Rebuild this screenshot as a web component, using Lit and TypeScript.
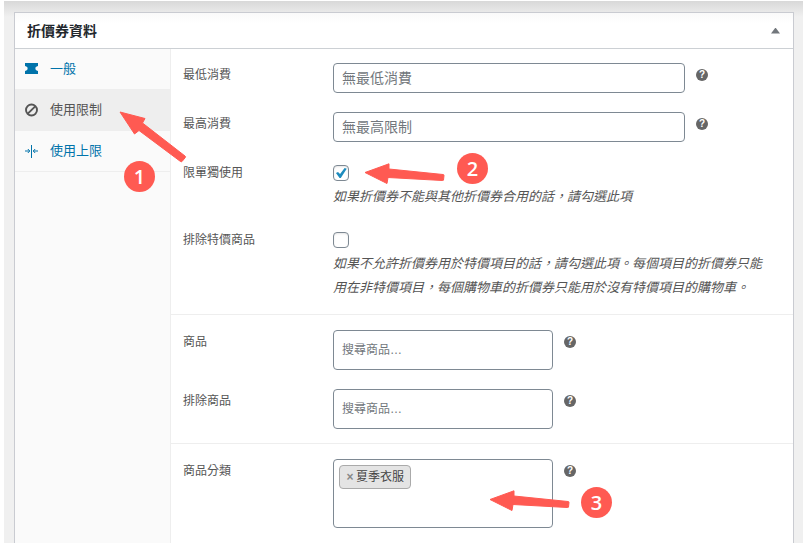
import { LitElement, html, css, svg, nothing } from "lit";
import { customElement, property, state } from "lit/decorators.js";
import { classMap } from "lit/directives/class-map.js";

const icons = {
  ticket: svg`<path d="M0 0h13v3c-2 .4-2.600 1.200-2.600 2.500S11 7.500 13 8v3H0V8c2-.5 2.600-1.200 2.600-2.500S2 3.400 0 3z" fill="currentColor"/>`,
  ban: svg`<circle cx="6.500" cy="6" r="5.500" fill="none" stroke="currentColor" stroke-width="1.900"/><path d="M2.800 9.700l7.400-7.400" stroke="currentColor" stroke-width="1.900"/>`,
  limit: svg`<path d="M6.500 0v13M0 6h4.500M13 6H8.500M2.800 4l2 2-2 2M10.200 4l-2 2 2 2" fill="none" stroke="currentColor" stroke-width="1"/>`,
};

type IconName = keyof typeof icons;

const tabs: { id: string; label: string; icon: IconName }[] = [
  { id: "general", label: "一般", icon: "ticket" },
  { id: "restriction", label: "使用限制", icon: "ban" },
  { id: "limits", label: "使用上限", icon: "limit" },
];

@customElement("form-row")
class FormRow extends LitElement {
  @property() label = "";
  @property() kind: "text" | "check" | "search" = "text";
  @property() hint = "";
  @property() note = "";
  @property({ type: Boolean }) checked = false;
  @property({ type: Boolean }) tall = false;
  @property({ attribute: false }) tags: string[] = [];

  static styles = css`
    :host {
      display: block;
    }
    .row {
      display: grid;
      grid-template-columns: 150px minmax(0, 1fr);
      padding: 5px 20px 5px 12px;
      margin-bottom: 9px;
      line-height: 24px;
    }
    .label {
      font-size: 12px;
      color: #555;
    }
    .line {
      display: flex;
      align-items: flex-start;
      gap: 11px;
    }
    input {
      box-sizing: border-box;
      margin: 0;
      font-family: inherit;
      color: #555;
    }
    input::placeholder {
      color: #72777c;
      opacity: 1;
    }
    .text,
    .box {
      box-sizing: border-box;
      border: 1px solid #7e8993;
      border-radius: 4px;
      background: #fff;
    }
    .text {
      width: 80%;
      height: 30px;
      padding: 0 8px;
      font-size: 14px;
    }
    .box {
      width: 50%;
      min-height: 40px;
      padding: 5px;
      display: flex;
      flex-wrap: wrap;
      align-content: flex-start;
      gap: 5px;
    }
    .box.tall {
      min-height: 69px;
    }
    .search {
      flex: 1;
      min-width: 40px;
      height: 28px;
      padding: 0 3px;
      border: 0;
      outline: 0;
      background: none;
      font-size: 12px;
    }
    .tag {
      box-sizing: border-box;
      display: flex;
      align-items: center;
      gap: 2px;
      height: 24px;
      padding: 0 6px;
      border: 1px solid #aaa;
      border-radius: 4px;
      background: #e4e4e4;
      color: #444;
      font-size: 12px;
      line-height: 22px;
    }
    .remove {
      width: 8px;
      padding: 0;
      border: 0;
      background: none;
      color: #888;
      font: bold 12px "Liberation Sans", sans-serif;
    }
    .help {
      flex: none;
      width: 12px;
      height: 12px;
      margin-top: 6px;
      padding: 0;
      border: 0;
      border-radius: 50%;
      background: #666;
      color: #fff;
      font: bold 10px/12px "Liberation Sans", sans-serif;
      text-align: center;
    }
    .check {
      appearance: none;
      width: 16px;
      height: 16px;
      margin: 4px 0;
      border: 1px solid #7e8993;
      border-radius: 4px;
      background: #fff;
      box-shadow: inset 0 1px 2px rgba(0, 0, 0, 0.1);
    }
    .check:checked::before {
      content: "";
      display: block;
      width: 12px;
      height: 12px;
      margin: 1px;
      background: #1e8cbe;
      clip-path: polygon(8% 50%, 25% 42%, 42% 58%, 80% 8%, 98% 14%, 48% 92%, 38% 92%);
    }
    .note {
      margin: 0;
      font-size: 13px;
      font-style: italic;
      color: #555;
    }
  `;

  private control() {
    if (this.kind === "check") {
      return html`<input id="field" class="check" type="checkbox" .checked=${this.checked} />`;
    }
    if (this.kind === "search") {
      return html`<div class=${classMap({ box: true, tall: this.tall })}>
        ${this.tags.map(
          (t) => html`<span class="tag"><button class="remove" aria-label="移除 ${t}">×</button>${t}</span>`
        )}
        <input id="field" class="search" type="text" placeholder=${this.hint} />
      </div>`;
    }
    return html`<input id="field" class="text" type="text" placeholder=${this.hint} />`;
  }

  render() {
    return html`<div class="row">
      <label class="label" for="field">${this.label}</label>
      <div>
        <div class="line">
          ${this.control()}
          ${this.kind === "check" ? nothing : html`<button class="help" aria-label="說明">?</button>`}
        </div>
        ${this.note ? html`<p class="note">${this.note}</p>` : nothing}
      </div>
    </div>`;
  }
}

@customElement("app-root")
class AppRoot extends LitElement {
  @state() private active = "restriction";

  static styles = css`
    :host {
      display: flex;
      box-sizing: border-box;
      min-height: 100vh;
      padding: 1px 0 1px 4px;
      position: relative;
      background: #fff;
      font-family: "Liberation Sans", "Noto Sans CJK TC", sans-serif;
    }
    .page {
      flex: 1;
      display: flex;
      padding: 11px 9px 0 10px;
      background: linear-gradient(#d8d8d8, #f0f0f0 16px);
    }
    .panel {
      flex: 1;
      display: flex;
      flex-direction: column;
      border: 1px solid #c9cbd1;
      border-bottom: 0;
      background: #fff;
    }
    .head {
      display: flex;
      align-items: center;
      justify-content: space-between;
      height: 35px;
      padding: 0 13px 0 12px;
      border-bottom: 1px solid #ccd0d4;
      background: linear-gradient(#fafafa, #fff 10px);
    }
    .title {
      margin: 0;
      font-size: 14px;
      font-weight: 600;
      line-height: 20px;
      color: #23282d;
    }
    .toggle {
      width: 9px;
      height: 6px;
      padding: 0;
      border: 0;
      background: #72777c;
      clip-path: polygon(50% 0, 100% 100%, 0 100%);
    }
    .body {
      flex: 1;
      display: flex;
    }
    .tabs {
      box-sizing: border-box;
      flex: none;
      width: 156px;
      border-right: 1px solid #eee;
      background: #fafafa;
    }
    .tab {
      display: flex;
      align-items: center;
      gap: 12px;
      padding: 10px;
      border-bottom: 1px solid #eee;
      color: #0073aa;
      font-size: 13px;
      line-height: 20px;
      text-decoration: none;
    }
    .tab.active {
      background: #eee;
      color: #555;
    }
    .icon {
      width: 13px;
      height: 13px;
      overflow: visible;
    }
    .fields {
      flex: 1;
      min-width: 0;
    }
    .group {
      padding-top: 9px;
      border-bottom: 1px solid #eee;
    }
    .group:last-child {
      border-bottom: 0;
    }
    .group + .group {
      border-top: 1px solid #fff;
    }
    .arrow {
      position: absolute;
      fill: #ff5a52;
      stroke: #ff5a52;
      stroke-width: 1;
      stroke-linejoin: round;
      pointer-events: none;
    }
    .badge {
      position: absolute;
      width: 31px;
      height: 31px;
      border-radius: 50%;
      background: #ff5a52;
      color: #fff;
      font: 600 20px/31px "Open Sans", sans-serif;
      text-align: center;
    }
    .arrow-1 {
      left: 119px;
      top: 111px;
    }
    .arrow-2 {
      left: 364px;
      top: 162px;
    }
    .arrow-3 {
      left: 489px;
      top: 489px;
    }
    .badge-1 {
      left: 124px;
      top: 161px;
    }
    .badge-2 {
      left: 457px;
      top: 153px;
    }
    .badge-3 {
      left: 581px;
      top: 487px;
    }
  `;

  private sideArrow(cls: string) {
    return html`<svg class="arrow ${cls}" width="81" height="23" viewBox="0 0 81 23" aria-hidden="true">
      <path d="M1 10.500L25 1.800V7l54 5.500q1 0 1 1l-.5 4.500q0 .500-1 .500L24 15.500l-1 6z" />
    </svg>`;
  }

  render() {
    return html`
      <main class="page">
        <section class="panel">
          <header class="head">
            <h2 class="title">折價券資料</h2>
            <button class="toggle" aria-label="切換面板"></button>
          </header>
          <div class="body">
            <nav class="tabs">
              ${tabs.map(
                (t) => html`<a
                  href="#${t.id}"
                  class=${classMap({ tab: true, active: t.id === this.active })}
                  @click=${() => (this.active = t.id)}
                  ><svg class="icon" viewBox="0 0 13 13" aria-hidden="true">${icons[t.icon]}</svg>${t.label}</a
                >`
              )}
            </nav>
            <form class="fields">
              <div class="group">
                <form-row label="最低消費" hint="無最低消費"></form-row>
                <form-row label="最高消費" hint="無最高限制"></form-row>
                <form-row
                  kind="check"
                  label="限單獨使用"
                  checked
                  note="如果折價券不能與其他折價券合用的話，請勾選此項"
                ></form-row>
                <form-row
                  kind="check"
                  label="排除特價商品"
                  note="如果不允許折價券用於特價項目的話，請勾選此項。每個項目的折價券只能用在非特價項目，每個購物車的折價券只能用於沒有特價項目的購物車。"
                ></form-row>
              </div>
              <div class="group">
                <form-row kind="search" label="商品" hint="搜尋商品…"></form-row>
                <form-row kind="search" label="排除商品" hint="搜尋商品…"></form-row>
              </div>
              <div class="group">
                <form-row kind="search" label="商品分類" tall .tags=${["夏季衣服"]}></form-row>
              </div>
            </form>
          </div>
        </section>
      </main>
      <svg class="arrow arrow-1" width="68" height="52" viewBox="0 0 68 52" aria-hidden="true">
        <path d="M1 1l25 6.500-2.500 4.500L66 45q1 .700.300 1.500l-3.300 4q-.7.500-1.500 0L20 19.500 15.500 23z" />
      </svg>
      ${this.sideArrow("arrow-2")} ${this.sideArrow("arrow-3")}
      <span class="badge badge-1">1</span>
      <span class="badge badge-2">2</span>
      <span class="badge badge-3">3</span>
    `;
  }
}
